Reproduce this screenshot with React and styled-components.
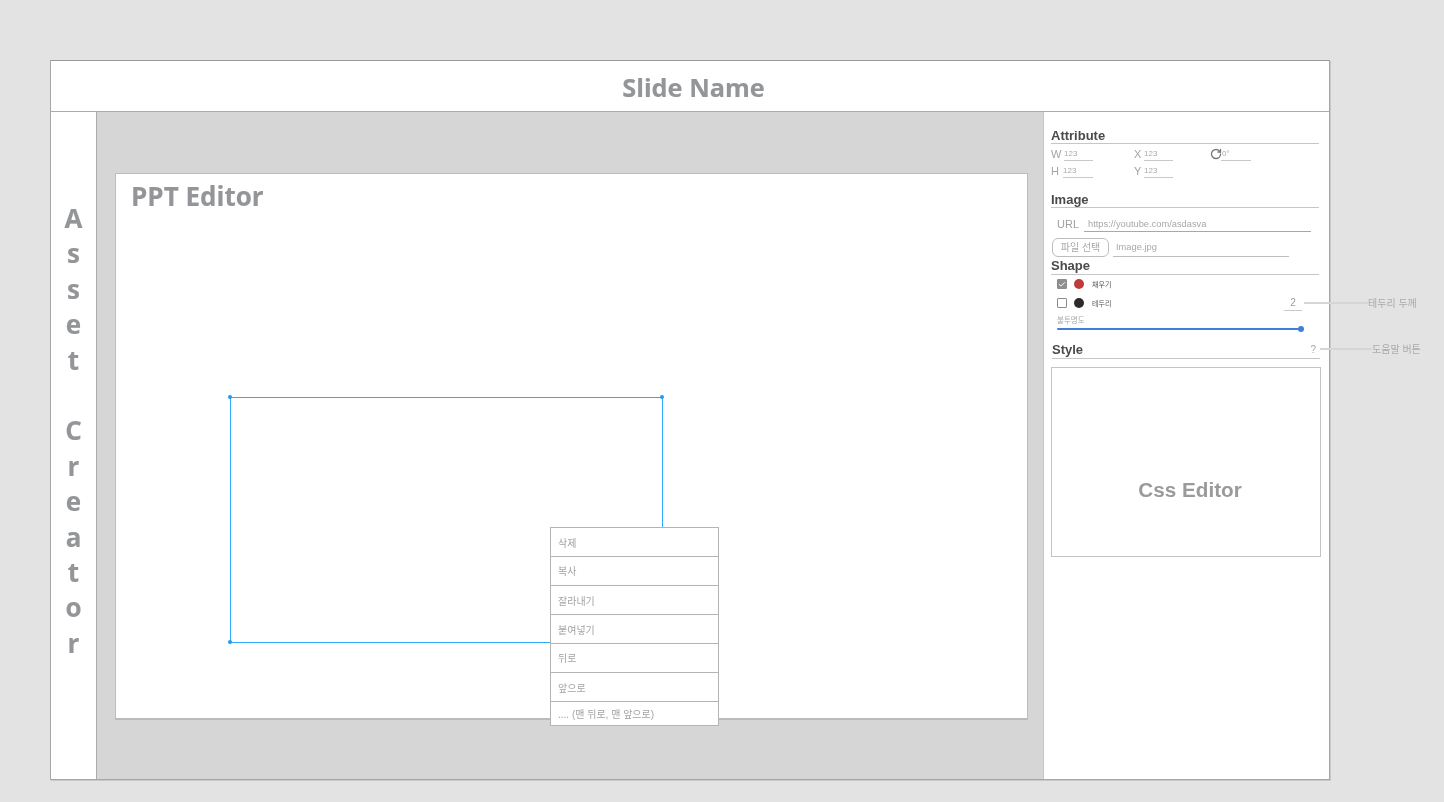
import React from "react";
import styled, { createGlobalStyle } from "styled-components";
import { RotateCw, Check } from "lucide-react";

const Global = createGlobalStyle`
  html, body { margin: 0; padding: 0; background: #e3e3e3; }
  body { font-family: "Liberation Sans", "Noto Sans CJK KR", sans-serif; }
`;
const Page = styled.div`
  position: relative;
  width: 1444px;
  height: 802px;
  padding: 60px 0 0 50px;
  box-sizing: border-box;
  overflow: hidden;
  will-change: transform;
`;
const Frame = styled.div`
  width: 1280px;
  height: 720px;
  box-sizing: border-box;
  border: 1px solid #a6a6a6;
  border-top-color: #999;
  box-shadow: 1px 1px 0 #c8c8c8;
  display: flex;
  flex-direction: column;
  background: #fff;
`;
const Header = styled.header`
  height: 51px;
  flex: none;
  box-sizing: border-box;
  border-bottom: 1px solid #ababab;
  display: flex;
  align-items: center;
  justify-content: center;
  font: 700 25.3px "Open Sans", "Noto Sans", sans-serif;
  -webkit-text-stroke: 0.15px #939598;
  color: #939598;
  padding: 2px 0 0 7px;
`;
const Body = styled.div`
  flex: 1;
  display: flex;
  min-height: 0;
`;
const AssetColumn = styled.aside`
  width: 46px;
  flex: none;
  box-sizing: border-box;
  border-right: 1px solid #ababab;
  display: flex;
  flex-direction: column;
  align-items: center;
  padding-top: 89px;
  font: 700 26px/35.4px "Open Sans", "Noto Sans", sans-serif;
  -webkit-text-stroke: 0.15px #939598;
  color: #939598;
`;
const Letter = styled.span`
  display: block;
  height: 35.4px;
`;
const Workspace = styled.main`
  width: 946px;
  flex: none;
  background: #d6d6d6;
  padding: 61px 0 0 18px;
  box-sizing: border-box;
`;
const SlideCard = styled.section`
  position: relative;
  width: 913px;
  height: 547px;
  box-sizing: border-box;
  background: #fff;
  border: 1px solid #bdbdbd;
  border-bottom: 2px solid #bbb;
  padding: 5px 0 0 15px;
`;
const SlideTitle = styled.h1`
  margin: 0;
  font: 700 26px/34px "Open Sans", "Noto Sans", sans-serif;
  -webkit-text-stroke: 0.15px #939598;
  color: #939598;
`;
const Selection = styled.div`
  position: absolute;
  left: 114px;
  top: 223px;
  width: 431px;
  height: 244px;
  border: 1px solid #2fa8fb;
`;
const Handle = styled.i`
  position: absolute;
  width: 4px;
  height: 4px;
  border-radius: 50%;
  background: #1f9cf0;
  left: ${(p) => p.$x}px;
  top: ${(p) => p.$y}px;
`;
const ContextMenu = styled.ul`
  position: absolute;
  left: 434px;
  top: 353px;
  width: 169px;
  margin: 0;
  padding: 0;
  list-style: none;
  background: #fff;
  border: 1px solid #b4b4b4;
  box-sizing: border-box;
`;
const MenuItem = styled.li`
  height: ${(p) => p.$h}px;
  box-sizing: border-box;
  border-top: ${(p) => (p.$first ? "none" : "1px solid #b4b4b4")};
  padding: ${(p) => p.$pad}px 0 0 7px;
  font-size: 10px;
  line-height: 13px;
  color: #a3a3a3;
  white-space: nowrap;
`;
const Inspector = styled.aside`
  flex: 1;
  box-sizing: border-box;
  border-left: 1px solid #c4c4c4;
  padding: 16px 0 0 7px;
  color: #4a4a4a;
`;
const Heading = styled.h2`
  margin: ${(p) => p.$mt || 0}px 0 0 ${(p) => p.$ml || 0}px;
  width: 268px;
  height: ${(p) => p.$h || 16}px;
  box-sizing: border-box;
  border-bottom: 1px solid #c6c6c6;
  font: 700 13px/15px "Liberation Sans", sans-serif;
  color: #4a4a4a;
  display: flex;
  justify-content: space-between;
`;
const Help = styled.span`
  font-weight: 400;
  font-size: 10px;
  color: #a8a8a8;
  margin-right: 4px;
`;
const AttrGrid = styled.div`
  display: grid;
  grid-template-columns: 83px 76px 1fr;
  grid-auto-rows: 17px;
  padding-top: 2px;
  width: 268px;
  height: 39px;
`;
const AttrCell = styled.div`
  display: flex;
  align-items: center;
  gap: 2px;
  color: #a4a4a4;
  font-size: 11px;
  height: 16px;
`;
const AttrLabel = styled.span`
  width: ${(p) => p.$w}px;
  flex: none;
  display: flex;
`;
const AttrValue = styled.span`
  display: block;
  width: ${(p) => p.$w || 29}px;
  height: 14px;
  margin-bottom: 1px;
  box-sizing: border-box;
  border-bottom: 1px solid #c9c9c9;
  font-size: 8px;
  line-height: 14px;
  color: #aaa;
`;
const RotateValue = styled(AttrValue)`
  padding-left: 1px;
`;
const UrlRow = styled.div`
  display: flex;
  align-items: flex-end;
  height: 24px;
  padding-left: 6px;
`;
const UrlLabel = styled.span`
  width: 27px;
  font-size: 11px;
  line-height: 16px;
  color: #a0a0a0;
`;
const UnderlinedText = styled.span`
  display: block;
  width: ${(p) => p.$w}px;
  height: 17px;
  box-sizing: border-box;
  border-bottom: 1px solid ${(p) => p.$c || "#bdbdbd"};
  font-size: 9.3px;
  line-height: ${(p) => p.$lh}px;
  padding-left: ${(p) => p.$p}px;
  color: #a8a8a8;
`;
const FileRow = styled.div`
  display: flex;
  align-items: flex-end;
  gap: 4px;
  margin-top: 6px;
  padding-left: 1px;
`;
const FileButton = styled.button`
  width: 57px;
  height: 19px;
  padding: 0 0 2px;
  box-sizing: border-box;
  background: #fff;
  border: 1px solid #bdbdbd;
  border-radius: 6px;
  font: 10px "Liberation Sans", "Noto Sans CJK KR", sans-serif;
  color: #a8a8a8;
`;
const ShapeRow = styled.div`
  display: flex;
  align-items: center;
  height: ${(p) => p.$h}px;
  padding-left: 6px;
  width: 245px;
`;
const CheckBox = styled.span`
  width: 10px;
  height: 10px;
  flex: none;
  box-sizing: border-box;
  border: 1px solid #8c8c8c;
  background: ${(p) => (p.$on ? "#8f8f8f" : "#fff")};
  border-radius: 1px;
  display: flex;
  align-items: center;
  justify-content: center;
  color: #fff;
`;
const Swatch = styled.span`
  width: 10px;
  height: 10px;
  flex: none;
  border-radius: 50%;
  margin: 0 8px 0 7px;
  background: ${(p) => p.$c};
`;
const SwatchName = styled.span`
  font-size: 7px;
  color: #555;
  flex: 1;
`;
const Thickness = styled.span`
  width: 18px;
  height: 15px;
  box-sizing: border-box;
  border-bottom: 1px solid #c9c9c9;
  margin-top: 1px;
  font-size: 10px;
  line-height: 13px;
  text-align: center;
  color: #a0a0a0;
`;
const OpacityLabel = styled.div`
  font-size: 7.5px;
  line-height: 9px;
  color: #a8a8a8;
  padding: 3px 0 0 6px;
`;
const Slider = styled.div`
  position: relative;
  margin: 3px 0 0 6px;
  width: 244px;
  height: 2px;
  border-radius: 1px;
  background: #3f7fd8;
`;
const SliderKnob = styled.i`
  position: absolute;
  right: -3px;
  top: -2px;
  width: 6px;
  height: 6px;
  border-radius: 50%;
  background: #3f7fd8;
`;
const CssBox = styled.div`
  margin-top: 8px;
  width: 270px;
  height: 190px;
  box-sizing: border-box;
  border: 1px solid #c4c4c4;
  display: flex;
  align-items: center;
  justify-content: center;
  padding: 56px 0 0 8px;
  font: 700 20.7px "Liberation Sans", sans-serif;
  color: #9a9a9a;
`;
const Note = styled.div`
  position: absolute;
  left: ${(p) => p.$x}px;
  top: ${(p) => p.$y}px;
  display: flex;
  align-items: center;
  height: 12px;
  font-size: 10px;
  color: #aaa;
  white-space: nowrap;
`;
const NoteLine = styled.i`
  display: block;
  width: ${(p) => p.$w}px;
  height: 2px;
  margin-top: 1px;
  background: #d6d6d6;
`;

const word = "Asset Creator".split("");
const menu = [
  { label: "삭제", h: 28, pad: 9 },
  { label: "복사", h: 29, pad: 8 },
  { label: "잘라내기", h: 29, pad: 9 },
  { label: "붙여넣기", h: 29, pad: 9 },
  { label: "뒤로", h: 29, pad: 8 },
  { label: "앞으로", h: 29, pad: 9 },
  { label: ".... (맨 뒤로, 맨 앞으로)", h: 24, pad: 6 },
];

export default function App() {
  return (
    <Page>
      <Global />
      <Frame>
        <Header>Slide Name</Header>
        <Body>
          <AssetColumn>
            {word.map((c, i) => (
              <Letter key={i}>{c}</Letter>
            ))}
          </AssetColumn>
          <Workspace>
            <SlideCard>
              <SlideTitle>PPT Editor</SlideTitle>
              <Selection>
                <Handle $x={-3} $y={-3} />
                <Handle $x={429} $y={-3} />
                <Handle $x={-3} $y={242} />
              </Selection>
              <ContextMenu>
                {menu.map((m, i) => (
                  <MenuItem key={m.label} $first={i === 0} $h={m.h} $pad={m.pad}>
                    {m.label}
                  </MenuItem>
                ))}
              </ContextMenu>
            </SlideCard>
          </Workspace>
          <Inspector>
            <Heading>Attribute</Heading>
            <AttrGrid>
              <AttrCell><AttrLabel $w={11}>W</AttrLabel><AttrValue>123</AttrValue></AttrCell>
              <AttrCell><AttrLabel $w={8}>X</AttrLabel><AttrValue>123</AttrValue></AttrCell>
              <AttrCell><AttrLabel $w={9}><RotateCw size={12} strokeWidth={2.6} color="#777" style={{ flex: "none" }} /></AttrLabel><RotateValue $w={30}>0°</RotateValue></AttrCell>
              <AttrCell><AttrLabel $w={10}>H</AttrLabel><AttrValue $w={30}>123</AttrValue></AttrCell>
              <AttrCell><AttrLabel $w={8}>Y</AttrLabel><AttrValue>123</AttrValue></AttrCell>
            </AttrGrid>
            <Heading $mt={7}>Image</Heading>
            <UrlRow>
              <UrlLabel>URL</UrlLabel>
              <UnderlinedText $w={227} $p={4} $lh={18} $c="#a8a8a8">https://youtube.com/asdasva</UnderlinedText>
            </UrlRow>
            <FileRow>
              <FileButton>파일 선택</FileButton>
              <UnderlinedText $w={176} $p={3} $lh={14}>Image.jpg</UnderlinedText>
            </FileRow>
            <Heading $mt={1} $h={17}>Shape</Heading>
            <ShapeRow $h={18}>
              <CheckBox $on><Check size={9} strokeWidth={3} /></CheckBox>
              <Swatch $c="#c0393b" />
              <SwatchName>채우기</SwatchName>
            </ShapeRow>
            <ShapeRow $h={20}>
              <CheckBox />
              <Swatch $c="#2b2b2b" />
              <SwatchName>테두리</SwatchName>
              <Thickness>2</Thickness>
            </ShapeRow>
            <OpacityLabel>불투명도</OpacityLabel>
            <Slider><SliderKnob /></Slider>
            <Heading $mt={12} $ml={1} $h={17}>Style<Help>?</Help></Heading>
            <CssBox>Css Editor</CssBox>
          </Inspector>
        </Body>
      </Frame>
      <Note $x={1304} $y={296}><NoteLine $w={64} />테두리 두께</Note>
      <Note $x={1320} $y={342}><NoteLine $w={52} />도움말 버튼</Note>
    </Page>
  );
}
